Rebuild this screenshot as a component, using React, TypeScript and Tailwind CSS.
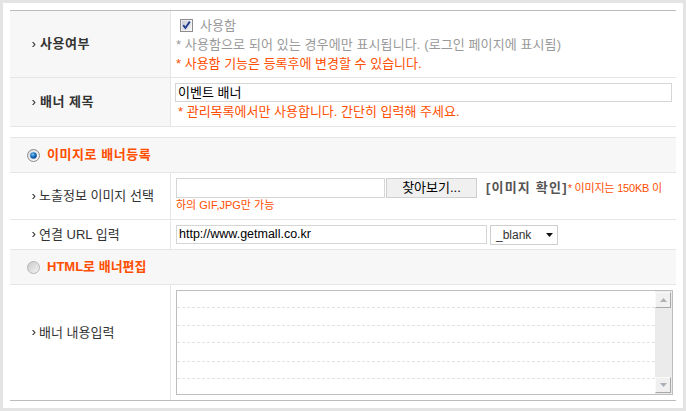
import React from "react";

function Bullet() {
  return (
    <svg width="4" height="5" viewBox="0 0 4 5" className="shrink-0">
      <polygon points="0,0 1.4,0 3.6,2.5 1.4,5 0,5 2.2,2.5" fill="#333" />
    </svg>
  );
}

function CheckBox() {
  return (
    <svg width="13" height="13" viewBox="0 0 13 13" className="shrink-0">
      <defs>
        <linearGradient id="cbg" x1="0" y1="0" x2="1" y2="1">
          <stop offset="0" stopColor="#c9c9d2" />
          <stop offset="1" stopColor="#f4f4f6" />
        </linearGradient>
      </defs>
      <rect x="0.5" y="0.5" width="12" height="12" fill="#fff" stroke="#8d8d8d" />
      <rect x="1.5" y="1.5" width="10" height="10" fill="url(#cbg)" />
      <path d="M3.2 6.2 L5.4 9 L9.8 2.6" stroke="#233e8e" strokeWidth="1.9" fill="none" />
    </svg>
  );
}

function Radio({ checked }: { checked: boolean }) {
  return (
    <svg width="13" height="13" viewBox="0 0 13 13" className="shrink-0">
      <defs>
        <linearGradient id={checked ? "rgc" : "rgu"} x1="0" y1="0" x2="1" y2="1">
          <stop offset="0" stopColor={checked ? "#d8d8d8" : "#c8c8c8"} />
          <stop offset="1" stopColor={checked ? "#ffffff" : "#f6f6f6"} />
        </linearGradient>
        <radialGradient id="rdot" cx="0.4" cy="0.35" r="0.7">
          <stop offset="0" stopColor="#7cc4f4" />
          <stop offset="0.5" stopColor="#1a74c4" />
          <stop offset="1" stopColor="#0b3e7a" />
        </radialGradient>
      </defs>
      <circle cx="6.5" cy="6.5" r="6" fill={checked ? "url(#rgc)" : "url(#rgu)"} stroke={checked ? "#8a8a8a" : "#b5b5b5"} />
      {checked && <circle cx="6.5" cy="6.5" r="3.3" fill="url(#rdot)" />}
    </svg>
  );
}

function Label({ text, cls }: { text: string; cls: string }) {
  return (
    <div className="flex items-center gap-[3px] pl-[22px]">
      <Bullet />
      <span className={cls}>{text}</span>
    </div>
  );
}

export default function App() {
  return (
    <div className="w-[686px] h-[411px] bg-[#e4e4e4] p-[3px] [font-family:'Liberation_Sans','Noto_Sans_CJK_KR',sans-serif]">
      <div className="h-full bg-white px-[7px] pt-[7px]">
        <div className="border-t border-[#bbbbbb]">
          {/* Row 1 */}
          <div className="flex h-[67px] border-b border-[#e6e6e6]">
            <div className="w-[161px] shrink-0 bg-[#f7f7f7] border-r border-[#e6e6e6] flex items-center">
              <Label text="사용여부" cls="ml-[1px] font-bold text-[13px] tracking-[0.5px] text-[#333]" />
            </div>
            <div className="flex flex-col justify-center pl-[5px] text-[13px] leading-[19px]">
              <div className="flex items-center">
                <span className="ml-[4px]"><CheckBox /></span>
                <span className="ml-[7px] text-[#999]">사용함</span>
              </div>
              <div className="text-[#999] tracking-[0.1px]">* 사용함으로 되어 있는 경우에만 표시됩니다. (로그인 페이지에 표시됨)</div>
              <div className="text-[#ff4e00]">* 사용함 기능은 등록후에 변경할 수 있습니다.</div>
            </div>
          </div>
          {/* Row 2 */}
          <div className="flex h-[49px] border-b border-[#e6e6e6]">
            <div className="w-[161px] shrink-0 bg-[#f7f7f7] border-r border-[#e6e6e6] flex items-center">
              <Label text="배너 제목" cls="ml-[1px] font-bold text-[13px] tracking-[0.5px] text-[#333]" />
            </div>
            <div className="flex flex-col pl-[4px] pt-[5px]">
              <div className="w-[497px] h-[19px] border border-[#d6d6d6] flex items-center pl-[2px] text-[13px] text-black">이벤트 배너</div>
              <div className="pl-[3px] text-[13px] leading-[19px] text-[#ff4e00]">* 관리목록에서만 사용합니다. 간단히 입력해 주세요.</div>
            </div>
          </div>
        </div>

        {/* Section: image */}
        <div className="mt-[10px] h-[36px] border-t border-b border-[#e6e6e6] bg-[#f7f7f7] flex items-center pl-[17px] gap-[7px]">
          <Radio checked />
          <span className="text-[13px] font-bold tracking-[0.55px] text-[#ff4e00]">이미지로 배너등록</span>
        </div>
        <div className="flex h-[47px] border-b border-[#e6e6e6]">
          <div className="w-[161px] shrink-0 border-r border-[#e6e6e6] flex items-center">
            <Label text="노출정보 이미지 선택" cls="text-[13px] text-[#333]" />
          </div>
          <div className="flex flex-col pl-[5px] pt-[5px]">
            <div className="flex items-center">
              <div className="w-[209px] h-[20px] border border-[#d6d6d6]" />
              <div className="ml-[1px] w-[91px] h-[20px] bg-[#f0f0f0] border border-[#d0d0d0] flex items-center justify-center text-[13px] text-black">찾아보기...</div>
              <span className="ml-[9px] text-[13px] font-bold tracking-[1.2px] text-[#555]">[이미지 확인]</span>
              <span className="text-[11px] tracking-[-0.2px] text-[#ff4e00]">* 이미지는 150KB 이</span>
            </div>
            <div className="text-[11px] leading-[14px] text-[#ff4e00]">하의 GIF,JPG만 가능</div>
          </div>
        </div>
        <div className="flex h-[30px] border-b border-[#e6e6e6]">
          <div className="w-[161px] shrink-0 border-r border-[#e6e6e6] flex items-center">
            <Label text="연결 URL 입력" cls="text-[13px] text-[#333]" />
          </div>
          <div className="flex items-center pl-[5px]">
            <div className="w-[311px] h-[19px] border border-[#d6d6d6] flex items-center pl-[2px] text-[12.5px] text-black">http://www.getmall.co.kr</div>
            <div className="ml-[3px] w-[68px] h-[20px] border border-[#cfcfcf] flex items-center justify-between pl-[5px] pr-[4px] text-[12px] text-[#333]">
              <span>_blank</span>
              <svg width="7" height="4" viewBox="0 0 7 4"><polygon points="0,0 7,0 3.5,4" fill="#111" /></svg>
            </div>
          </div>
        </div>

        {/* Section: HTML */}
        <div className="h-[35px] border-b border-[#e6e6e6] bg-[#f7f7f7] flex items-center pl-[17px] gap-[7px]">
          <Radio checked={false} />
          <span className="text-[13px] font-bold text-[#ff4e00]">HTML로 배너편집</span>
        </div>
        <div className="flex h-[116px] border-b border-[#bbbbbb]">
          <div className="w-[161px] shrink-0 border-r border-[#e6e6e6] flex items-center pb-[20px]">
            <Label text="배너 내용입력" cls="text-[13px] text-[#333]" />
          </div>
          <div className="flex pl-[5px] pt-[5px]">
            <div className="w-[497px] h-[105px] border border-[#bdbdbd] flex">
              <div className="flex-1 flex flex-col">
                <div className="h-[17px] border-b border-dashed border-[#e2e2e2]" />
                <div className="h-[18px] border-b border-dashed border-[#e2e2e2]" />
                <div className="h-[17px] border-b border-dashed border-[#e2e2e2]" />
                <div className="h-[19px] border-b border-dashed border-[#e2e2e2]" />
                <div className="h-[17px] border-b border-dashed border-[#e2e2e2]" />
              </div>
              <div className="w-[17px] bg-[#ebebeb] flex flex-col justify-between py-[1px] pr-[1px]">
                <div className="h-[16px] w-[16px] bg-[#f0f0f0] border border-t-[#fafafa] border-l-[#fafafa] border-b-[#a9a9a9] border-r-[#a9a9a9] flex items-center justify-center">
                  <svg width="7" height="4" viewBox="0 0 7 4"><polygon points="0,4 7,4 3.5,0" fill="#b0b0b0" /></svg>
                </div>
                <div className="h-[16px] w-[16px] bg-[#f0f0f0] border border-t-[#fafafa] border-l-[#fafafa] border-b-[#a9a9a9] border-r-[#a9a9a9] flex items-center justify-center">
                  <svg width="7" height="4" viewBox="0 0 7 4"><polygon points="0,0 7,0 3.5,4" fill="#a9b0bb" /></svg>
                </div>
              </div>
            </div>
          </div>
        </div>
      </div>
    </div>
  );
}
